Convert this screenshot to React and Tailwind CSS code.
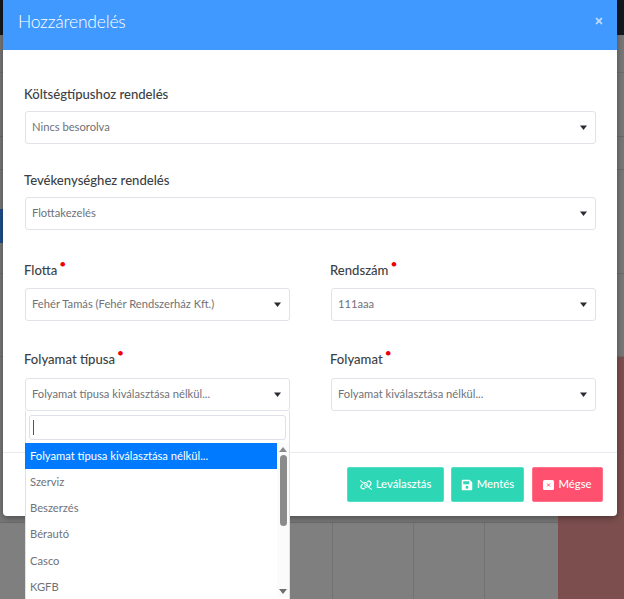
import React from "react";
import { FaSave, FaTimes } from "react-icons/fa";
import { FaLinkSlash } from "react-icons/fa6";

const Caret = () => (
  <svg width="7" height="5" viewBox="0 0 7 5" className="shrink-0">
    <path d="M0 0.4H7L3.5 5Z" fill="#2b2b33" />
  </svg>
);

const Select = ({ value, className = "" }) => (
  <div className={`flex h-[33px] items-center justify-between rounded-[3px] border border-[#e2e3e9] bg-white pl-[6px] pr-[8px] text-[11.2px] text-[#6f7278] ${className}`}>
    <span>{value}</span>
    <Caret />
  </div>
);

const Label = ({ children, required, className = "" }) => (
  <div className={`-ml-px h-5 text-[13.1px] font-medium leading-5 text-[#3c3f44] ${className}`}>
    {children}
    {required && <span className="relative top-[-7px] ml-[2px] text-[12px] leading-none text-[#f00000]">•</span>}
  </div>
);

const options = ["Szerviz", "Beszerzés", "Bérautó", "Casco", "KGFB"];

const Dropdown = () => (
  <div className="absolute left-0 top-[33px] z-10 h-[200px] w-[265px] border-x border-[#dfe1e8] bg-white">
    <div className="px-[3px] pt-[4px]">
      <div className="flex h-[25px] items-center rounded-[3px] border border-[#dfe1e8] pl-[3px]">
        <div className="h-[15px] w-px bg-[#555]" />
      </div>
    </div>
    <div className="mt-[3px] flex">
      <div className="w-[252px]">
        <div className="-ml-px flex h-[26px] items-center bg-[#007bff] pl-[5px] text-[11.2px] text-white">
          Folyamat típusa kiválasztása nélkül...
        </div>
        {options.map((o) => (
          <div key={o} className="flex h-[26.3px] items-center pl-[4px] text-[11.2px] text-[#6f7278]">
            {o}
          </div>
        ))}
      </div>
      <div className="flex h-[154px] w-[12px] flex-col items-center bg-[#fbfbfb] pt-[4px]">
        <svg width="8" height="5" viewBox="0 0 8 5"><path d="M0 5H8L4 0Z" fill="#8a8a8a" /></svg>
        <div className="mt-[3px] h-[71px] w-[7px] rounded-full bg-[#8b8b8b]" />
        <svg width="8" height="5" viewBox="0 0 8 5" className="mt-auto mb-[3px]"><path d="M0 0H8L4 5Z" fill="#6f6f6f" /></svg>
      </div>
    </div>
  </div>
);

const Button = ({ icon, children, className = "" }) => (
  <div className={`flex h-[35px] items-center justify-center gap-[4px] rounded-[2px] border text-[11.3px] font-medium text-white ${className}`}>
    {icon}
    <span>{children}</span>
  </div>
);

const CloseBox = () => (
  <svg width="11" height="10" viewBox="0 0 11 10" className="shrink-0">
    <rect width="11" height="10" rx="1.5" fill="#ffffff" />
    <path d="M4 3.5L7 6.5M7 3.5L4 6.5" stroke="#ff5070" strokeWidth="1" />
  </svg>
);

export default function App() {
  return (
    <div
      className="relative h-[599px] w-[624px] overflow-hidden bg-[#777777]"
      style={{ fontFamily: '"Lato", "Open Sans", sans-serif' }}
    >
      {/* dimmed page behind the dialog */}
      <div className="flex h-full flex-col">
        <div className="h-[35px] shrink-0 bg-[#14191e]" />
        <div className="h-[38px] shrink-0 border-b border-[#6c6c6c]" />
        <div className="h-[64px] shrink-0 border-b border-[#6a6a6a]" />
        <div className="h-[33px] shrink-0 border-b border-[#6a6a6a]" />
        <div className="h-[104px] shrink-0 border-b border-[#6c6c6c]" />
        <div className="h-[83px] shrink-0 border-b border-[#6c6c6c]" />
        <div className="h-[166px] shrink-0 border-b border-[#6a6a6a]" />
        <div className="flex grow bg-[#7f7f7f]">
          <div className="w-[333px] border-r border-[#727272]" />
          <div className="w-[81px] border-r border-[#727272]" />
          <div className="w-[71px] border-r border-[#727272]" />
          <div className="w-[73px]" />
          <div className="grow bg-[#7c4e4e]" />
        </div>
      </div>
      <div className="absolute right-0 top-[357px] h-[166px] w-[66px] bg-[#7c4e4e]" />
      <div className="absolute left-0 top-[209px] h-[34px] w-[3px] bg-[#1f4f8a]" />

      {/* dialog */}
      <div className="absolute left-[3px] top-0 flex h-[516px] w-[614px] flex-col rounded-b-[4px] bg-white shadow-[0_2px_6px_rgba(0,0,0,0.35)]">
        <div className="flex h-[50px] shrink-0 items-center justify-between bg-[#3f99ff] pb-[6px] pl-[15px] pr-[13px]">
          <span className="text-[17.5px] font-light tracking-[-0.2px] text-white">Hozzárendelés</span>
          <FaTimes className="mb-[3px] text-[10px] text-[#bcdaff]" />
        </div>

        <div className="flex h-[403px] shrink-0 flex-col border-b border-[#e9eaef] pl-[22px] pr-[21px] pt-[34px]">
          <Label className="mb-[7px]">Költségtípushoz rendelés</Label>
          <Select value="Nincs besorolva" />
          <Label className="mb-[7px] mt-[26px]">Tevékenységhez rendelés</Label>
          <Select value="Flottakezelés" />

          <div className="mt-[30px] grid grid-cols-2 gap-x-[41px]">
            <div>
              <Label className="mb-[8px]" required>Flotta</Label>
              <Select value="Fehér Tamás (Fehér Rendszerház Kft.)" />
            </div>
            <div>
              <Label className="mb-[8px]" required>Rendszám</Label>
              <Select value="111aaa" />
            </div>
          </div>

          <div className="mt-[28px] grid grid-cols-2 gap-x-[41px]">
            <div>
              <Label className="mb-[9px]" required>Folyamat típusa</Label>
              <div className="relative">
                <Select value="Folyamat típusa kiválasztása nélkül..." />
                <Dropdown />
              </div>
            </div>
            <div>
              <Label className="mb-[9px]" required>Folyamat</Label>
              <Select value="Folyamat kiválasztása nélkül..." />
            </div>
          </div>
        </div>

        <div className="flex justify-end gap-[7px] pr-[14px] pt-[14px]">
          <Button className="w-[97px] border-[#4fe0c4] bg-[#2dd6b5]" icon={<FaLinkSlash className="text-[12px]" />}>Leválasztás</Button>
          <Button className="w-[73px] border-[#4fe0c4] bg-[#2dd6b5]" icon={<FaSave className="text-[12px]" />}>Mentés</Button>
          <Button className="ml-[1px] w-[71px] border-[#ff7089] bg-[#ff5070]" icon={<CloseBox />}>Mégse</Button>
        </div>
      </div>
    </div>
  );
}
